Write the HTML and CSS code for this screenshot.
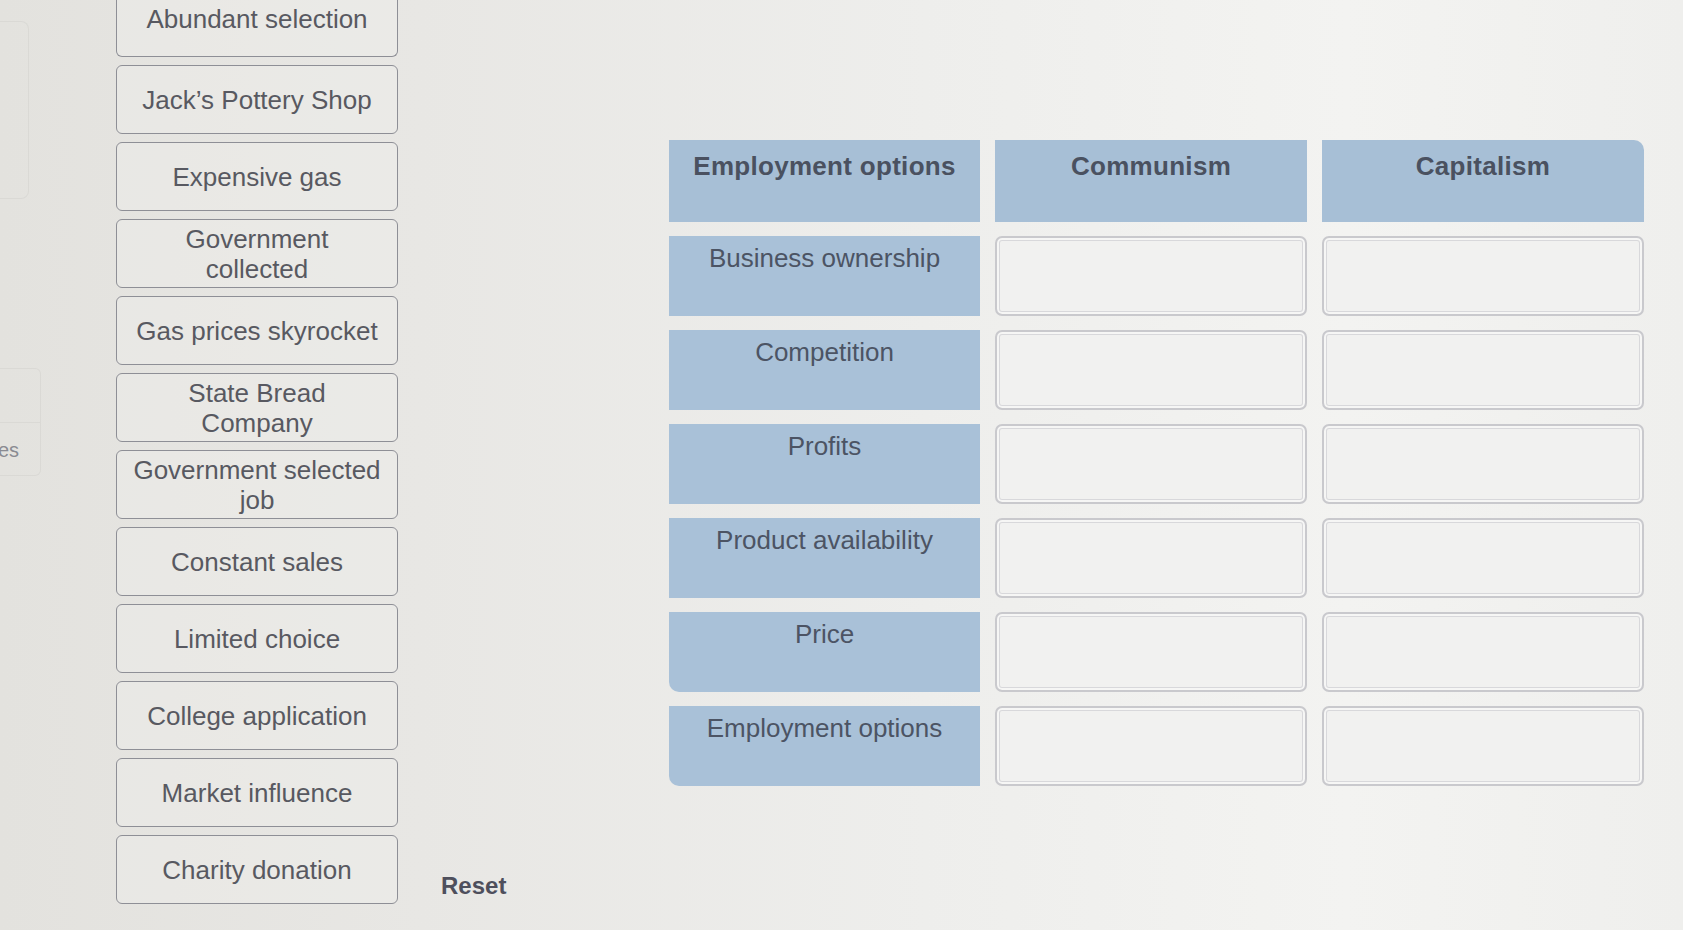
FILE: index.html
```html
<!DOCTYPE html>
<html lang="en">
<head>
<meta charset="utf-8">
<title>Economic systems sort</title>
<link rel="stylesheet" href="styles.css">
</head>
<body>
<div class="page">
  <div class="stub">
    <div class="stub-panel"></div>
    <div class="stub-panel stub-panel-2">
      <div class="stub-top"></div>
      <div class="stub-bottom">es</div>
    </div>
  </div>
  <div class="cards">
    <div class="card card-first">Abundant selection</div>
    <div class="card">Jack’s Pottery Shop</div>
    <div class="card">Expensive gas</div>
    <div class="card">Government<br>collected</div>
    <div class="card">Gas prices skyrocket</div>
    <div class="card">State Bread<br>Company</div>
    <div class="card">Government selected<br>job</div>
    <div class="card">Constant sales</div>
    <div class="card">Limited choice</div>
    <div class="card">College application</div>
    <div class="card">Market influence</div>
    <div class="card">Charity donation</div>
  </div>
  <div class="reset-wrap"><span class="reset">Reset</span></div>
  <div class="table">
    <div class="head">Employment options</div>
    <div class="head">Communism</div>
    <div class="head head-last">Capitalism</div>

    <div class="label">Business ownership</div>
    <div class="drop"></div>
    <div class="drop"></div>

    <div class="label">Competition</div>
    <div class="drop"></div>
    <div class="drop"></div>

    <div class="label">Profits</div>
    <div class="drop"></div>
    <div class="drop"></div>

    <div class="label">Product availability</div>
    <div class="drop"></div>
    <div class="drop"></div>

    <div class="label label-round">Price</div>
    <div class="drop"></div>
    <div class="drop"></div>

    <div class="label label-round">Employment options</div>
    <div class="drop"></div>
    <div class="drop"></div>
  </div>
</div>
</body>
</html>
```
FILE: styles.css
```css
html, body {
  margin: 0;
  padding: 0;
}
body {
  width: 1683px;
  height: 930px;
  overflow: hidden;
  background: linear-gradient(90deg, #e3e2de 0%, #e8e7e4 25%, #eeeeec 55%, #f3f3f1 80%, #efefed 100%);
  font-family: "Liberation Sans", Arial, sans-serif;
  color: #55565e;
}
.page {
  display: grid;
  grid-template-columns: 42px 74px 282px 271px 979px;
  height: 930px;
}
.stub {
  display: flex;
  flex-direction: column;
}
.stub-panel {
  margin-top: 21px;
  width: 29px;
  height: 178px;
  border: 1px solid #dad9d5;
  border-left: none;
  border-radius: 0 8px 8px 0;
  box-sizing: border-box;
}
.stub-panel-2 {
  margin-top: 169px;
  width: 41px;
  height: 108px;
  display: flex;
  flex-direction: column;
  border-radius: 0 6px 6px 0;
}
.stub-top {
  height: 53px;
  border-bottom: 1px solid #dad9d5;
}
.stub-bottom {
  font-size: 20px;
  color: #8a8b92;
  padding-top: 16px;
  margin-left: -2px;
}
.cards {
  grid-column: 3;
  display: flex;
  flex-direction: column;
  gap: 8px;
  margin-top: -12px;
}
.card {
  height: 69px;
  box-sizing: border-box;
  border: 1.5px solid #8e8f96;
  border-radius: 6px;
  display: flex;
  align-items: center;
  justify-content: center;
  text-align: center;
  font-size: 26px;
  line-height: 30px;
  color: #585961;
  background: rgba(240, 240, 238, 0.35);
}
.card-first {
  align-items: flex-start;
  padding-top: 16px;
  border-top: none;
  border-radius: 0 0 6px 6px;
}
.reset-wrap {
  grid-column: 4;
  display: flex;
  align-items: flex-end;
  padding-left: 43px;
  padding-bottom: 30px;
}
.reset {
  font-size: 24px;
  font-weight: bold;
  color: #4e4f5c;
}
.table {
  grid-column: 5;
  margin-top: 140px;
  align-self: start;
  display: grid;
  grid-template-columns: 311px 312px 322px;
  grid-template-rows: 82px repeat(6, 80px);
  column-gap: 15px;
  row-gap: 14px;
}
.head {
  background: #a7bfd6;
  font-weight: bold;
  font-size: 26px;
  color: #4a5160;
  text-align: center;
  padding-top: 11px;
  box-sizing: border-box;
  letter-spacing: 0.3px;
}
.head-last {
  border-top-right-radius: 10px;
}
.label {
  background: #a9c1d8;
  font-size: 26px;
  color: #4c5464;
  text-align: center;
  padding-top: 7px;
  box-sizing: border-box;
}
.label-round {
  border-bottom-left-radius: 10px;
}
.drop {
  background: #f1f1f0;
  border: 2px solid #c9c9cd;
  border-radius: 7px;
  box-shadow: inset 0 0 0 2px #f6f6f5, inset 0 0 0 3px #d8d8db;
}
```
